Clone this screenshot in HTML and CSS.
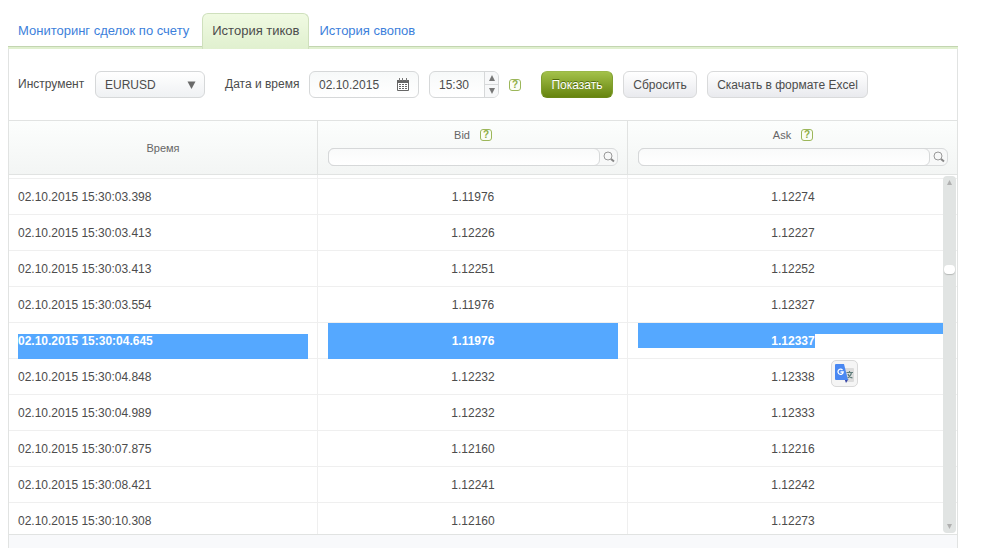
FILE: index.html
```
<!DOCTYPE html>
<html lang="ru">
<head>
    <meta charset="UTF-8">
    <meta name="viewport" content="width=device-width, initial-scale=1.0">
    <title>История тиков</title>
    <link rel="stylesheet" href="styles.css">
</head>
<body>
    <nav class="tabs">
        <a href="#" class="tab">Мониторинг сделок по счету</a>
        <a href="#" class="tab active">История тиков</a>
        <a href="#" class="tab">История свопов</a>
    </nav>

    <div class="panel">
        <form class="filter" onsubmit="return false">
            <label for="symbol" class="label-symbol">Инструмент</label>
            <div class="select">
                <select id="symbol">
                    <option>EURUSD</option>
                </select>
                <svg class="arrow" width="9" height="8" viewBox="0 0 9 8"><path d="M0.5 0.5h8L4.5 8z" fill="#6a6a6a"/></svg>
            </div>

            <label for="date" class="label-date">Дата и время</label>
            <div class="field date">
                <input type="text" id="date" value="02.10.2015">
                <svg width="12" height="13" viewBox="0 0 12 13">
                    <path d="M0 2h12v10a1 1 0 0 1-1 1H1a1 1 0 0 1-1-1z" fill="#666"/>
                    <path d="M2 0h1v3H2zM5 0h1v3H5zM9 0h1v3H9z" fill="#777"/>
                    <path d="M1 5h10v7H1z" fill="#fff"/>
                    <path d="M2 6h2v1H2zM5 6h2v1H5zM8 6h2v1H8zM2 8h2v1H2zM5 8h2v1H5zM8 8h2v1H8zM2 10h2v1H2zM5 10h2v1H5zM8 10h2v1H8z" fill="#666"/>
                </svg>
            </div>
            <div class="field time">
                <input type="text" value="15:30" aria-label="Время">
                <div class="spin">
                    <button type="button" aria-label="Больше"><svg width="6" height="6" viewBox="0 0 6 6"><path d="M3 0l3 6H0z" fill="#777"/></svg></button>
                    <button type="button" aria-label="Меньше"><svg width="6" height="6" viewBox="0 0 6 6"><path d="M3 6l3-6H0z" fill="#777"/></svg></button>
                </div>
            </div>
            <span class="help">?</span>

            <button class="btn btn-show">Показать</button>
            <button type="button" class="btn btn-reset">Сбросить</button>
            <button type="button" class="btn btn-excel">Скачать в формате Excel</button>
        </form>

        <div class="grid">
            <table>
                <colgroup>
                    <col class="col-time">
                    <col class="col-bid">
                    <col>
                </colgroup>
                <thead>
                    <tr>
                        <th>Время</th>
                        <th>
                            <div class="title">Bid <span class="help">?</span></div>
                            <div class="search">
                                <input type="text" aria-label="Bid">
                                <button type="button" aria-label="Поиск Bid"><svg width="12" height="12" viewBox="0 0 12 12"><circle cx="5" cy="5" r="4" fill="none" stroke="#999"/><path d="M8 8l3 2.5" stroke="#888" stroke-width="2"/></svg></button>
                            </div>
                        </th>
                        <th>
                            <div class="title">Ask <span class="help">?</span></div>
                            <div class="search">
                                <input type="text" aria-label="Ask">
                                <button type="button" aria-label="Поиск Ask"><svg width="12" height="12" viewBox="0 0 12 12"><circle cx="5" cy="5" r="4" fill="none" stroke="#999"/><path d="M8 8l3 2.5" stroke="#888" stroke-width="2"/></svg></button>
                            </div>
                        </th>
                    </tr>
                </thead>
                <tbody>
                    <tr class="spacer"><td></td><td></td><td></td></tr>
                    <tr><td>02.10.2015 15:30:03.398</td><td>1.11976</td><td>1.12274</td></tr>
                    <tr><td>02.10.2015 15:30:03.413</td><td>1.12226</td><td>1.12227</td></tr>
                    <tr><td>02.10.2015 15:30:03.413</td><td>1.12251</td><td>1.12252</td></tr>
                    <tr><td>02.10.2015 15:30:03.554</td><td>1.11976</td><td>1.12327</td></tr>
                    <tr class="selected">
                        <td><div class="sel sel-start">02.10.2015 15:30:04.645</div></td>
                        <td><div class="sel">1.11976</div></td>
                        <td><div class="sel sel-end">1.12337</div></td>
                    </tr>
                    <tr>
                        <td>02.10.2015 15:30:04.848</td>
                        <td>1.12232</td>
                        <td>1.12338
                            <button type="button" class="translate" aria-label="Перевести">
                                <svg width="19" height="19" viewBox="0 0 19 19">
                                    <path d="M8 4h10a1 1 0 0 1 1 1v12a1 1 0 0 1-1 1h-7z" fill="#dcdcdc"/>
                                    <path d="M11.500 8.500H18M14.500 7v1.500M16.500 8.500c-.5 3-2 4.500-4 5.500M13 10c.5 2 2.500 3.500 4.500 4" fill="none" stroke="#607d7b" stroke-width="1.200"/>
                                    <path d="M9.500 15h4L11 19z" fill="#3545a8"/>
                                    <path d="M1 0h8l4 16H1a1 1 0 0 1-1-1V1a1 1 0 0 1 1-1z" fill="#4a88f2"/>
                                    <path d="M7.500 6A2.600 2.600 0 1 0 8.200 8H5.500" fill="none" stroke="#fff" stroke-width="1.300"/>
                                </svg>
                            </button>
                        </td>
                    </tr>
                    <tr><td>02.10.2015 15:30:04.989</td><td>1.12232</td><td>1.12333</td></tr>
                    <tr><td>02.10.2015 15:30:07.875</td><td>1.12160</td><td>1.12216</td></tr>
                    <tr><td>02.10.2015 15:30:08.421</td><td>1.12241</td><td>1.12242</td></tr>
                    <tr><td>02.10.2015 15:30:10.308</td><td>1.12160</td><td>1.12273</td></tr>
                </tbody>
            </table>
            <div class="scrollbar">
                <svg width="5" height="5" viewBox="0 0 5 5"><path d="M2.500 0L5 5H0z" fill="#b0b0b0"/></svg>
                <div class="thumb"></div>
                <svg width="5" height="5" viewBox="0 0 5 5"><path d="M2.500 5L5 0H0z" fill="#b0b0b0"/></svg>
            </div>
        </div>
        <div class="footer"></div>
    </div>
</body>
</html>
```
FILE: styles.css
```
* {
    box-sizing: border-box;
}

body {
    margin: 0;
    padding: 13px 45px 0 8px;
    background-color: #fff;
    color: #4c4c4c;
    font-family: "Liberation Sans", Arial, sans-serif;
    font-size: 12px;
    height: 100vh;
    overflow: hidden;
    display: flex;
    flex-direction: column;
}

input, select, button {
    font-family: inherit;
    font-size: 12px;
    color: #4c4c4c;
    margin: 0;
    padding: 0;
}

button {
    cursor: pointer;
}

svg {
    display: block;
    flex: none;
}

/* Tabs */
.tabs {
    display: flex;
    height: 36px;
    border-bottom: 2px solid #e0f0cf;
    box-shadow: inset 0 -1px 0 #c3d5b1;
}

.tab {
    height: 36px;
    padding: 0 10px;
    font-size: 13px;
    line-height: 35px;
    color: #3d7fdb;
    text-decoration: none;
    white-space: nowrap;
}

.tab.active {
    margin-left: 3px;
    padding: 0 9px;
    color: #4c4c4c;
    border: 1px solid #cfe0bd;
    border-bottom: none;
    border-radius: 6px 6px 0 0;
    background: linear-gradient(#f0fae2, #e0f0cf);
    line-height: 33px;
}

/* Panel */
.panel {
    flex: 1;
    display: flex;
    flex-direction: column;
    border: 1px solid #e1e3e2;
    border-width: 0 1px;
}

.filter {
    display: flex;
    align-items: center;
    gap: 10px;
    padding: 22px 9px;
}

.filter label {
    padding-bottom: 2px;
    white-space: nowrap;
}

.label-symbol {
    width: 67px;
}

.label-date {
    width: 74px;
    margin-left: 10px;
}

.select {
    position: relative;
    width: 110px;
}

.select select {
    appearance: none;
    display: block;
    width: 100%;
    height: 27px;
    padding: 0 9px;
    border: 1px solid #d6d8d9;
    border-radius: 6px;
    background: linear-gradient(#fff, #eff1f3);
}

.select .arrow {
    position: absolute;
    right: 9px;
    top: 10px;
}

.field {
    display: flex;
    align-items: center;
    height: 27px;
    border: 1px solid #d6d8d9;
    border-radius: 6px;
    background: linear-gradient(#f7f9f9, #fff);
    overflow: hidden;
}

.field input {
    flex: 1;
    min-width: 0;
    padding-left: 9px;
    border: none;
    background: none;
}

.date {
    width: 110px;
    padding-right: 9px;
}

.time {
    width: 70px;
}

.spin {
    width: 14px;
    height: 25px;
    display: flex;
    flex-direction: column;
    border-left: 1px solid #d6d8d9;
}

.spin button {
    flex: 1;
    display: flex;
    align-items: center;
    justify-content: center;
    border: none;
    background: #f7f8f9;
}

.spin button + button {
    border-top: 1px solid #d6d8d9;
}

.help {
    width: 12px;
    height: 12px;
    border: 1px solid #9cb75a;
    border-radius: 3px;
    background-color: #fbfdf6;
    color: #8fae45;
    font-size: 10px;
    font-weight: bold;
    line-height: 10px;
    text-align: center;
}

.btn {
    height: 27px;
    border: 1px solid #d9dadb;
    border-radius: 6px;
    background: linear-gradient(#fff, #e9eaee);
    white-space: nowrap;
}

.btn-show {
    width: 72px;
    margin-left: 10px;
    border-color: #9ab848 #7f9e2e #6a8717;
    background: linear-gradient(#a3c14a, #66840f);
    color: #fff;
    text-shadow: 0 -1px 0 #4f6a0c;
}

.btn-reset {
    width: 74px;
}

.btn-excel {
    width: 161px;
}

/* Ticks table */
.grid {
    position: relative;
    height: 415px;
    border: 1px solid #e1e3e2;
    border-width: 1px 0;
    overflow: hidden;
}

table {
    width: 100%;
    table-layout: fixed;
    border-collapse: separate;
    border-spacing: 0;
}

.col-time {
    width: 309px;
}

.col-bid {
    width: 310px;
}

th {
    height: 54px;
    padding: 0 9px 0 10px;
    border-right: 1px solid #e1e3e2;
    border-bottom: 1px solid #e1e3e2;
    background: linear-gradient(#fcfefd, #f3f5f4);
    color: #666;
    font-size: 11px;
    font-weight: normal;
}

td {
    height: 36px;
    padding: 0 9px 0 10px;
    border-right: 1px solid #efefef;
    border-bottom: 1px solid #efefef;
    text-align: center;
    position: relative;
}

th:first-child, td:first-child {
    padding-left: 9px;
}

th:last-child, td:last-child {
    border-right: none;
}

td:first-child {
    text-align: left;
}

.spacer td {
    height: 4px;
}

.title {
    display: flex;
    justify-content: center;
    align-items: center;
    gap: 10px;
    margin-bottom: 7px;
}

.search {
    display: flex;
    height: 18px;
    border: 1px solid #d9dbdc;
    border-radius: 6px;
    background: #f7f8f8;
}

.search input {
    flex: 1;
    min-width: 0;
    height: 18px;
    margin: -1px 0 0 -1px;
    padding: 0 8px;
    border: 1px solid #d6d8d9;
    border-radius: 6px;
    background: linear-gradient(#f9fafa, #fff);
}

.search button {
    width: 17px;
    border: none;
    background: none;
    display: flex;
    align-items: center;
    justify-content: center;
}

/* Selected text */
.selected {
    color: #fff;
    font-weight: bold;
}

.sel {
    height: 35px;
    line-height: 36px;
    background-color: #55a8ff;
    box-shadow: 0 1px 0 #55a8ff;
}

.sel-start {
    background: linear-gradient(transparent 11px, #55a8ff 11px);
}

.sel-end {
    background: linear-gradient(#55a8ff, #55a8ff) 0 0 / 100% 11px no-repeat,
        linear-gradient(#55a8ff, #55a8ff) 0 0 / calc(50% + 22px) 25px no-repeat;
    box-shadow: none;
}

.translate {
    position: absolute;
    top: 1px;
    left: calc(50% + 38px);
    width: 27px;
    height: 27px;
    display: flex;
    align-items: center;
    justify-content: center;
    border: 1px solid #d9d9d9;
    border-radius: 5px;
    background-color: #f5f5f5;
}

/* Scrollbar over the rows */
.scrollbar {
    position: absolute;
    top: 55px;
    right: 1px;
    bottom: 1px;
    width: 13px;
    padding: 4px 0;
    display: flex;
    flex-direction: column;
    align-items: center;
    border-radius: 4px;
    background-color: #e1e4e3;
}

.thumb {
    width: 11px;
    height: 9px;
    margin: 80px 0 auto;
    border-radius: 4px;
    background-color: #fff;
    box-shadow: 0 1px 1px #b5b8b7;
}

.footer {
    flex: 1;
    background-color: #f8f9fb;
}
```
